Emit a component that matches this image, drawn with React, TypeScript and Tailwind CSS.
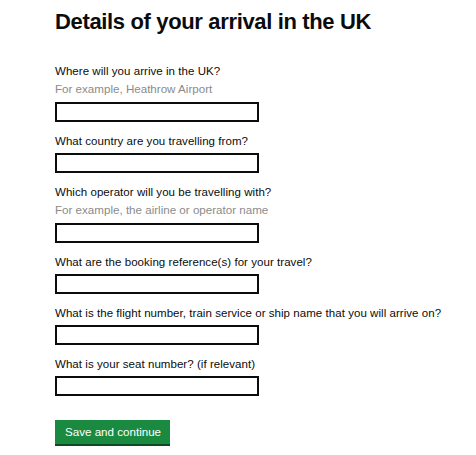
import React from 'react';

type Field = { label: string; hint?: string };

const FIELDS: Field[] = [
  { label: 'Where will you arrive in the UK?', hint: 'For example, Heathrow Airport' },
  { label: 'What country are you travelling from?' },
  { label: 'Which operator will you be travelling with?', hint: 'For example, the airline or operator name' },
  { label: 'What are the booking reference(s) for your travel?' },
  { label: 'What is the flight number, train service or ship name that you will arrive on?' },
  { label: 'What is your seat number? (if relevant)' },
];

const App: React.FC = () => {
  return (
    <div className="min-h-screen w-[476px] bg-white pl-[55px] pt-[8px] font-['Liberation_Sans',Arial,sans-serif] text-[#0b0c0c]">
      <h1 className="text-[22px] font-bold leading-[28px] tracking-[-0.35px] mb-[27px]">
        Details of your arrival in the UK
      </h1>

      <form onSubmit={(e) => e.preventDefault()}>
        {FIELDS.map((f, idx) => (
          <div key={idx} className="mb-[11px] flex flex-col">
            <label className={`text-[11.5px] leading-4 tracking-[0.05px] whitespace-nowrap ${f.hint ? 'mb-[2px]' : 'mb-1'}`}>
              {f.label}
            </label>
            {f.hint && (
              <span className="text-[11.6px] leading-4 text-[#8b8b8b] mb-[5px]">{f.hint}</span>
            )}
            <input
              type="text"
              className="w-[204px] h-[20px] border-2 border-[#0b0c0c] bg-white outline-none"
            />
          </div>
        ))}

        <button
          type="submit"
          className="mt-[13px] h-[24px] w-[115px] bg-[#1b8a41] text-white text-[11.6px] leading-none text-left pl-[10px] shadow-[0_2px_0_#0d4a22]"
        >
          Save and continue
        </button>
      </form>
    </div>
  );
};

export default App;
